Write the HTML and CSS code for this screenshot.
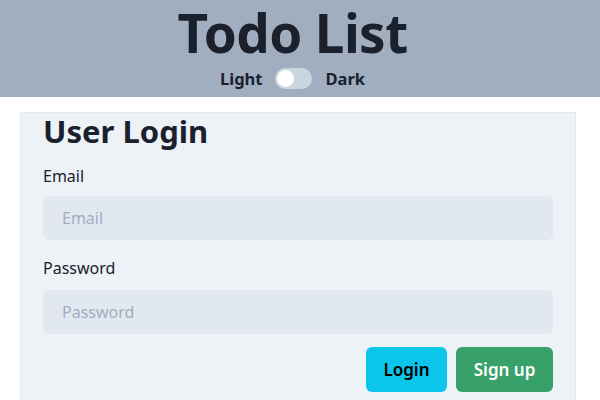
FILE: index.html
```html
<!DOCTYPE html>
<html>
<head>
<meta charset="utf-8">
<link rel="stylesheet" href="styles.css">
</head>
<body>
<header class="header">
  <h1 class="title">Todo List</h1>
  <div class="theme-row">
    <span class="theme-label">Light</span>
    <span class="switch"><span class="knob"></span></span>
    <span class="theme-label">Dark</span>
  </div>
</header>
<main class="card">
  <h2 class="card-title">User Login</h2>
  <label class="field-label">Email</label>
  <div class="input">Email</div>
  <label class="field-label field-label-2">Password</label>
  <div class="input">Password</div>
  <div class="actions">
    <button class="btn btn-login">Login</button>
    <button class="btn btn-signup">Sign up</button>
  </div>
</main>
</body>
</html>
```
FILE: styles.css
```css
* { box-sizing: border-box; }
html, body { margin: 0; padding: 0; background: #fff; }
body {
  font-family: "Noto Sans", "Open Sans", sans-serif;
  color: #1a202c;
  width: 600px;
  height: 400px;
  overflow: hidden;
}
.header {
  background: #a0aec0;
  height: 97px;
  display: flex;
  flex-direction: column;
  align-items: center;
  padding-right: 15px;
}
.title {
  margin: 0;
  font-size: 53px;
  font-weight: 700;
  line-height: 66px;
  letter-spacing: -0.6px;
  color: #1a202c;
}
.theme-row {
  display: flex;
  align-items: center;
  gap: 13px;
  height: 24px;
}
.theme-label {
  font-size: 16.5px;
  font-weight: 700;
}
.switch {
  width: 37px;
  height: 21px;
  border-radius: 11px;
  background: #cbd5e0;
  display: flex;
  align-items: center;
  padding: 2px;
}
.knob {
  width: 17px;
  height: 17px;
  border-radius: 50%;
  background: #fff;
}
.card {
  margin: 15px 0 0 20px;
  width: 556px;
  background: #edf2f7;
  border: 1px solid #e2e8f0;
  padding: 0 22px 20px 22px;
  display: flex;
  flex-direction: column;
}
.card-title {
  margin: 0;
  font-size: 31px;
  font-weight: 700;
  line-height: 36px;
}
.field-label {
  font-size: 16px;
  line-height: 24px;
  margin-top: 15px;
  margin-bottom: 8px;
}
.field-label-2 {
  margin-top: 16px;
  margin-bottom: 10px;
}
.input {
  height: 44px;
  background: #e2e8f0;
  border-radius: 6px;
  padding: 0 19px;
  display: flex;
  align-items: center;
  color: #a0aec0;
  font-size: 16px;
}
.actions {
  display: flex;
  justify-content: flex-end;
  gap: 9px;
  margin-top: 13px;
}
.btn {
  font-family: inherit;
  border: none;
  height: 45px;
  border-radius: 6px;
  font-size: 17px;
  font-weight: 600;
  padding: 0;
  white-space: nowrap;
}
.btn-login { background: #0bc5ea; color: #000; width: 81px; }
.btn-signup { background: #38a169; color: #fff; width: 97px; }
```
